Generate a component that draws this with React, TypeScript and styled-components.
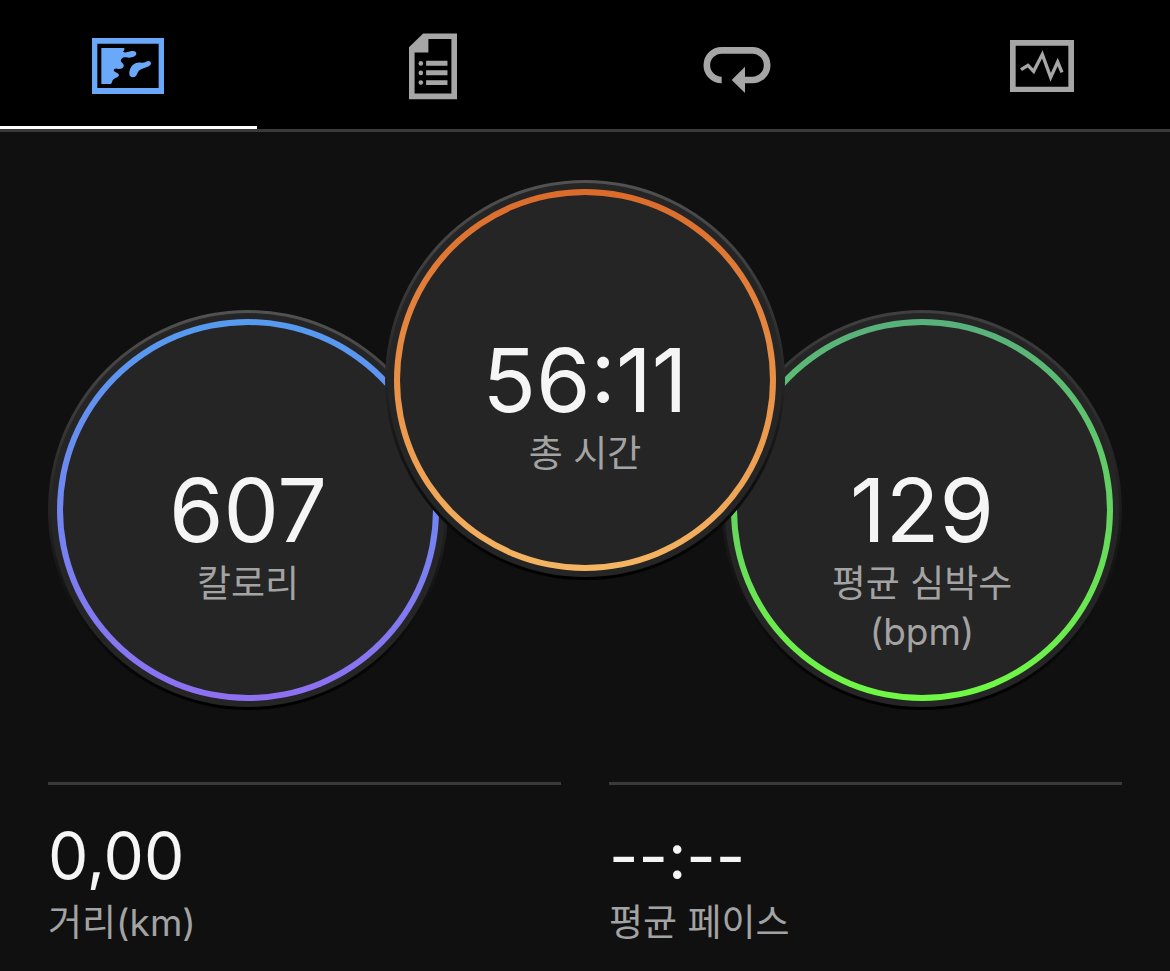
import React from "react";
import styled, { createGlobalStyle } from "styled-components";

const GlobalStyle = createGlobalStyle`
  * { box-sizing: border-box; }
  body {
    margin: 0;
    background: #101010;
    color: #f5f5f5;
    font-family: Inter, "Noto Sans CJK KR", sans-serif;
    -webkit-font-smoothing: antialiased;
  }
`;

const Page = styled.div`
  min-height: 100vh;
  background: #101010;
`;

const Tabs = styled.nav`
  display: flex;
  gap: 48px;
  background: #000;
  border-bottom: 3px solid #3a3a3a;
`;

const Tab = styled.button<{ $active?: boolean }>`
  flex: 1 1 0;
  display: flex;
  align-items: center;
  justify-content: center;
  height: 129px;
  padding: 6px 0 0;
  border: 0;
  border-bottom: 3px solid ${(p) => (p.$active ? "#fff" : "transparent")};
  background: none;
  color: ${(p) => (p.$active ? "#6aa8fa" : "#a6a6a6")};
  cursor: pointer;
`;

const Content = styled.main`
  padding: 48px 48px 20px;
`;

const Dials = styled.section`
  display: flex;
  justify-content: space-between;
  align-items: flex-start;
`;

const Dial = styled.div<{ $raised?: boolean; $rim: string; $rimSide: string }>`
  position: relative;
  z-index: ${(p) => (p.$raised ? 1 : 0)};
  flex: none;
  display: flex;
  width: min(400px, 38%);
  aspect-ratio: 1;
  margin: ${(p) => (p.$raised ? "0 -9%" : "130px 0 0")};
  padding: 6px;
  border: 3px solid transparent;
  border-radius: 50%;
  background:
    linear-gradient(#252525, #252525) padding-box,
    linear-gradient(${(p) => p.$rim}, ${(p) => p.$rimSide} 52%, #101010 75%, #000) border-box;
`;

const Ring = styled.div<{ $from: string; $to: string }>`
  flex: 1;
  min-width: 0;
  display: grid;
  grid-template-rows: 1fr auto 1fr;
  justify-items: center;
  border: 6px solid transparent;
  border-radius: 50%;
  background:
    linear-gradient(#252525, #252525) padding-box,
    linear-gradient(${(p) => p.$from}, ${(p) => p.$to}) border-box;
`;

const DialValue = styled.div`
  grid-row: 2;
  font-size: 88px;
  line-height: 100px;
`;

const Label = styled.div`
  color: #a3a3a3;
  font-size: 37px;
  line-height: 48px;
`;

const DialLabel = styled(Label)`
  grid-row: 3;
  height: 0;
  max-width: 200px;
  text-align: center;
`;

const Stats = styled.section`
  display: grid;
  grid-template-columns: 1fr 1fr;
  gap: 48px;
  margin-top: 72px;
`;

const Stat = styled.div`
  padding-top: 28px;
  border-top: 3px solid #3a3a3a;
`;

const StatValue = styled.div`
  font-size: 64px;
  line-height: 86px;
`;

const MapIcon = () => (
  <svg width="72" height="56" viewBox="0 0 216 168" fill="currentColor" aria-hidden="true">
    <path fillRule="evenodd" d="M0 0H216V168H0ZM16 17V150H200V17Z" />
    <path d="M28 30H97Q99 36 93 41Q98 45 107 42L118 39Q133 37 133 47Q133 53 122 57Q112 61 102 58Q94 57 89 62Q84 67 88 72L94 78Q98 85 92 90Q84 94 76 92Q66 91 65 97Q65 101 74 104Q83 108 80 114Q77 118 70 120Q61 125 60 131Q60 136 56 138H28Z" />
    <path d="M112 109Q111 91 123 80Q134 71 150 74Q159 75 165 70Q174 66 177 75Q178 82 167 86L147 94Q139 98 135 108Q132 118 122 118Q113 117 112 109Z" />
  </svg>
);

const DetailsIcon = () => (
  <svg width="48" height="67" viewBox="0 0 146 201" fill="currentColor" aria-hidden="true">
    <path fillRule="evenodd" d="M43 0H146V200H0V42ZM59 17V58H17V183H129V17Z" />
    <circle cx="36" cy="91" r="7" />
    <circle cx="36" cy="120" r="7" />
    <circle cx="36" cy="149" r="7" />
    <path d="M52 83H117V98H52ZM52 112H117V127H52ZM52 142H117V157H52Z" />
  </svg>
);

const LapsIcon = () => (
  <svg width="68" height="54" viewBox="0 -24 204 162" aria-hidden="true">
    <path d="M56 99A44.500 44.500 0 0 1 56 10H148A44.500 44.500 0 0 1 148 99H120" fill="none" stroke="currentColor" strokeWidth="20" />
    <path d="M126 59V138L86 99Z" fill="currentColor" />
  </svg>
);

const ChartIcon = () => (
  <svg width="64" height="52" viewBox="0 0 192 156" aria-hidden="true">
    <path fillRule="evenodd" d="M0 0H192V156H0ZM17 17V140H175V17Z" fill="currentColor" />
    <path d="M33 89L54 76L71 94L97 43L122 112L143 66L156 97" fill="none" stroke="currentColor" strokeWidth="10" strokeMiterlimit="8" />
  </svg>
);

const tabs = [
  { name: "지도", Icon: MapIcon },
  { name: "세부 정보", Icon: DetailsIcon },
  { name: "랩", Icon: LapsIcon },
  { name: "차트", Icon: ChartIcon },
];

const dials = [
  { value: "607", label: "칼로리", from: "#559bf0", to: "#8e70f2", rim: "#525252", rimSide: "#222" },
  { value: "56:11", label: "총 시간", from: "#db6b2b", to: "#f5b562", rim: "#525252", rimSide: "#222", raised: true },
  { value: "129", label: "평균 심박수 (bpm)", from: "#58b07c", to: "#70f944", rim: "#404040", rimSide: "#1a1a1a" },
];

const stats = [
  { value: "0,00", label: "거리(km)" },
  { value: "--:--", label: "평균 페이스" },
];

export default function App() {
  const [active, setActive] = React.useState(0);
  return (
    <Page>
      <GlobalStyle />
      <Tabs>
        {tabs.map(({ name, Icon }, i) => (
          <Tab key={name} type="button" aria-label={name} $active={i === active} onClick={() => setActive(i)}>
            <Icon />
          </Tab>
        ))}
      </Tabs>
      <Content>
        <Dials>
          {dials.map((d) => (
            <Dial key={d.label} $raised={d.raised} $rim={d.rim} $rimSide={d.rimSide}>
              <Ring $from={d.from} $to={d.to}>
                <DialValue>{d.value}</DialValue>
                <DialLabel>{d.label}</DialLabel>
              </Ring>
            </Dial>
          ))}
        </Dials>
        <Stats>
          {stats.map((s) => (
            <Stat key={s.label}>
              <StatValue>{s.value}</StatValue>
              <Label>{s.label}</Label>
            </Stat>
          ))}
        </Stats>
      </Content>
    </Page>
  );
}
